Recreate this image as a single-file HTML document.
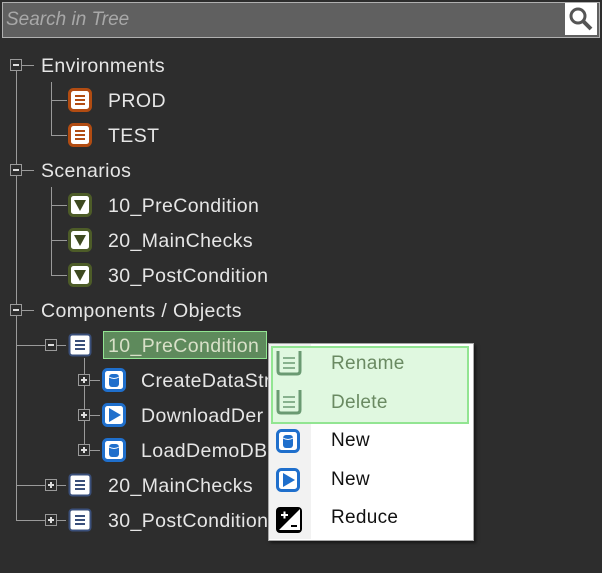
<!DOCTYPE html>
<html><head><meta charset="utf-8"><style>
body{margin:0;width:602px;height:573px;background:#2d2d2d;position:relative;overflow:hidden;font-family:"Liberation Sans",sans-serif}
.a{position:absolute}
.t{position:absolute;color:#e6e6e6;font-size:19.5px;letter-spacing:.4px;line-height:20px;white-space:nowrap}
.l{position:absolute;background:#9a9a9a}
.ex{position:absolute;width:10px;height:10px;border:1px solid #9a9a9a;background:#2d2d2d}
.ex::before{content:"";position:absolute;left:2px;top:4px;width:6px;height:2px;background:#ddd}
.ex.p::after{content:"";position:absolute;left:4px;top:2px;width:2px;height:6px;background:#ddd}
.m{position:absolute;left:331px;font-size:19px;letter-spacing:.3px;line-height:20px;color:#111}
</style></head><body>
<div class="a" style="left:2px;top:2px;width:596px;height:34px;background:#606060;border:1px solid #b0b0b0"></div>
<div class="a" style="left:6px;top:9px;font-size:19px;font-style:italic;color:#a8a8a8">Search in Tree</div>
<div class="a" style="left:565px;top:3px;width:32px;height:32px;background:#fff"></div>
<svg class="a" style="left:566px;top:4px" width="30" height="30"><circle cx="12" cy="12" r="7" fill="none" stroke="#555" stroke-width="3"/><line x1="17" y1="17" x2="25" y2="25" stroke="#555" stroke-width="4"/></svg>

<div class="l" style="left:16px;top:71px;width:1px;height:240px"></div>
<div class="l" style="left:16px;top:316px;width:1px;height:205px"></div>
<div class="l" style="left:51px;top:82px;width:1px;height:53px"></div>
<div class="l" style="left:51px;top:100px;width:16px;height:1px"></div>
<div class="l" style="left:51px;top:135px;width:16px;height:1px"></div>
<div class="l" style="left:51px;top:187px;width:1px;height:88px"></div>
<div class="l" style="left:51px;top:205px;width:16px;height:1px"></div>
<div class="l" style="left:51px;top:240px;width:16px;height:1px"></div>
<div class="l" style="left:51px;top:275px;width:16px;height:1px"></div>
<div class="l" style="left:22px;top:65px;width:12px;height:1px"></div>
<div class="l" style="left:22px;top:170px;width:12px;height:1px"></div>
<div class="l" style="left:22px;top:310px;width:12px;height:1px"></div>
<div class="l" style="left:16px;top:345px;width:50px;height:1px"></div>
<div class="l" style="left:16px;top:485px;width:50px;height:1px"></div>
<div class="l" style="left:16px;top:520px;width:50px;height:1px"></div>
<div class="l" style="left:84px;top:358px;width:1px;height:92px"></div>
<div class="l" style="left:84px;top:380px;width:16px;height:1px"></div>
<div class="l" style="left:84px;top:415px;width:16px;height:1px"></div>
<div class="l" style="left:84px;top:450px;width:16px;height:1px"></div>

<div class="ex" style="left:10px;top:59px"></div>
<div class="ex" style="left:10px;top:164px"></div>
<div class="ex" style="left:10px;top:304px"></div>
<div class="ex" style="left:45px;top:339px"></div>
<div class="ex p" style="left:45px;top:479px"></div>
<div class="ex p" style="left:45px;top:514px"></div>
<div class="ex p" style="left:78px;top:374px"></div>
<div class="ex p" style="left:78px;top:409px"></div>
<div class="ex p" style="left:78px;top:444px"></div>

<div class="t" style="left:41px;top:56px">Environments</div>
<div class="t" style="left:41px;top:161px">Scenarios</div>
<div class="t" style="left:41px;top:301px">Components / Objects</div>
<div class="t" style="left:108px;top:91px">PROD</div>
<div class="t" style="left:108px;top:126px">TEST</div>
<div class="t" style="left:108px;top:196px">10_PreCondition</div>
<div class="t" style="left:108px;top:231px">20_MainChecks</div>
<div class="t" style="left:108px;top:266px">30_PostCondition</div>

<div class="a" style="left:103px;top:331px;width:162px;height:26px;background:#5e8a5c;border:1px solid #92e592"></div>
<div class="t" style="left:108px;top:336px;color:#d8e0c8">10_PreCondition</div>
<div class="t" style="left:141px;top:371px">CreateDataStr</div>
<div class="t" style="left:141px;top:406px">DownloadDer</div>
<div class="t" style="left:141px;top:441px">LoadDemoDB</div>
<div class="t" style="left:108px;top:476px">20_MainChecks</div>
<div class="t" style="left:108px;top:511px">30_PostCondition</div>

<svg class="a" style="left:0;top:0" width="602" height="573">
<defs>
<g id="de"><rect x="1.5" y="1.5" width="21" height="21" rx="4" fill="#fff" stroke="#b24c12" stroke-width="3"/><path d="M7 8h10M7 12h10M7 16h10" stroke="#b24c12" stroke-width="2"/></g>
<g id="sc"><rect x="1.5" y="1.5" width="21" height="21" rx="4" fill="#fff" stroke="#4d5c28" stroke-width="3"/><path d="M6 7h12l-6 11z" fill="#3e4a20"/></g>
<g id="dc"><rect x="1.5" y="1.5" width="21" height="21" rx="3" fill="#fff" stroke="#3a4f7a" stroke-width="2"/><path d="M7 8h10M7 12h10M7 16h10" stroke="#3a4f7a" stroke-width="2"/></g>
<g id="cy"><rect x="1.5" y="1.5" width="21" height="21" rx="4" fill="#fff" stroke="#1f6fcc" stroke-width="3"/><rect x="7" y="6" width="10" height="13" rx="3" fill="#1f6fcc"/><path d="M7 9q5 3 10 0" stroke="#fff" fill="none"/></g>
<g id="pl"><rect x="1.5" y="1.5" width="21" height="21" rx="4" fill="#fff" stroke="#1f6fcc" stroke-width="3"/><path d="M7 5v14l12-7z" fill="#1f6fcc"/></g>
</defs>
<use href="#de" x="68" y="88"/><use href="#de" x="68" y="123"/>
<use href="#sc" x="68" y="193"/><use href="#sc" x="68" y="228"/><use href="#sc" x="68" y="263"/>
<use href="#dc" x="68" y="333"/><use href="#dc" x="68" y="473"/><use href="#dc" x="68" y="508"/>
<use href="#cy" x="102" y="368"/><use href="#pl" x="102" y="403"/><use href="#cy" x="102" y="438"/>
</svg>

<div class="a" style="left:268px;top:343px;width:204px;height:196px;background:#fff;border:1px solid #a8a8a8;box-shadow:2px 2px 3px rgba(0,0,0,.5)"></div>
<div class="a" style="left:269px;top:344px;width:42px;height:195px;background:#f2f2f2"></div>
<div class="a" style="left:271px;top:346px;height:74px;background:#e0f8e0;border:2px solid #92e592;width:194px"></div>
<svg class="a" style="left:268px;top:343px" width="50" height="196">
<g fill="none" stroke="#6a9a72" stroke-width="3"><path d="M10 8v20q0 3 3 3h16q3 0 3-3V8"/><path d="M10 47v20q0 3 3 3h16q3 0 3-3V47"/></g>
<path d="M15 15h12M15 20h12M15 25h12M15 54h12M15 59h12M15 64h12" stroke="#6a9a72" stroke-width="1.5"/>
<use href="#cy" x="8" y="86"/><use href="#pl" x="8" y="125"/>
<rect x="8" y="164" width="26" height="26" rx="4" fill="#000"/><path d="M11 187l21-21v21z" fill="#fff"/>
<path d="M13 172h7M16.5 168.5v7" stroke="#fff" stroke-width="2"/><path d="M23 183h6" stroke="#000" stroke-width="2"/>
</svg>
<div class="m" style="top:354px;color:#6a8a62">Rename</div>
<div class="m" style="top:393px;color:#6a8a62">Delete</div>
<div class="m" style="top:431px">New</div>
<div class="m" style="top:470px">New</div>
<div class="m" style="top:508px">Reduce</div>
</body></html>
